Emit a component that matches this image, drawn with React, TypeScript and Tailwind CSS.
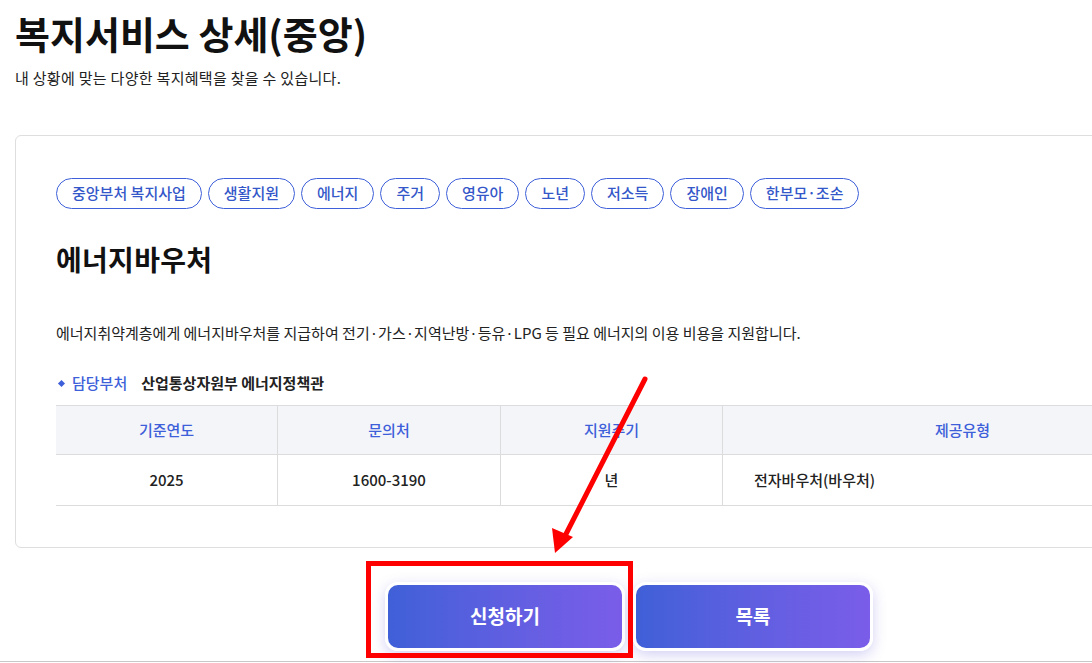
import React from 'react';

const tags = ['중앙부처 복지사업', '생활지원', '에너지', '주거', '영유아', '노년', '저소득', '장애인', '한부모·조손'];

const headers = ['기준연도', '문의처', '지원주기', '제공유형'];

const App: React.FC = () => {
  return (
    <div
      className="relative w-[1092px] h-[663px] overflow-hidden bg-white text-[#222]"
      style={{ fontFamily: '"Noto Sans CJK KR", "Noto Sans", sans-serif' }}
    >
      <div className="w-[1260px] px-[15px] pt-[10px] pb-[10px] border-b border-[#c8c8c8]">
        <h1 className="text-[38px] leading-[46px] font-bold text-[#111]">복지서비스 상세(중앙)</h1>
        <p className="mt-[12px] text-[15px] leading-[20px] text-[#222] tracking-[0.3px]">내 상황에 맞는 다양한 복지혜택을 찾을 수 있습니다.</p>

        <div className="mt-[47px] w-[1228px] border border-[#dedede] rounded-[6px] px-[40px] pt-[42px] pb-[41px]">
          <div className="flex gap-[6px]">
            {tags.map((tag) => (
              <span
                key={tag}
                className="h-[31px] px-[15px] flex items-center rounded-full border border-[#3d5fd9] text-[15px] font-medium text-[#3457c9]"
              >
                {tag}
              </span>
            ))}
          </div>

          <h2 className="mt-[32px] text-[28px] leading-[36px] font-bold text-[#111] tracking-[0.3px]">에너지바우처</h2>

          <p className="mt-[46px] text-[15px] leading-[20px] text-[#222]">
            에너지취약계층에게 에너지바우처를 지급하여 전기·가스·지역난방·등유·LPG 등 필요 에너지의 이용 비용을 지원합니다.
          </p>

          <div className="mt-[30px] flex items-center text-[15px] leading-[20px]">
            <span className="ml-[3px] w-[5px] h-[5px] bg-[#3d5fd9] rotate-45" />
            <span className="ml-[8px] font-medium text-[#3d5fd9]">담당부처</span>
            <span className="ml-[14px] font-bold text-[#222]">산업통상자원부 에너지정책관</span>
          </div>

          <div className="mt-[12px] border-t border-[#dcdcdc]">
            <div className="grid grid-cols-[221px_223px_222px_1fr] bg-[#f4f5f9] border-b border-[#dcdcdc] h-[49px]">
              {headers.map((h, i) => (
                <div
                  key={h}
                  className={`flex items-center justify-center text-[15px] font-medium text-[#3d5fd9] ${i > 0 ? 'border-l border-[#dcdcdc]' : ''}`}
                >
                  {h}
                </div>
              ))}
            </div>
            <div className="grid grid-cols-[221px_223px_222px_1fr] border-b border-[#dcdcdc] h-[51px] text-[15px] font-medium text-[#222]">
              <div className="flex items-center justify-center">2025</div>
              <div className="flex items-center justify-center border-l border-[#dcdcdc]">1600-3190</div>
              <div className="flex items-center justify-center border-l border-[#dcdcdc]">년</div>
              <div className="flex items-center pl-[31px] border-l border-[#dcdcdc]">전자바우처(바우처)</div>
            </div>
          </div>
        </div>

        <div className="mt-[34px] w-[1228px] flex justify-center gap-[8px]">
          <button className="w-[240px] h-[69px] rounded-[13px] border-[3px] border-white bg-gradient-to-r from-[#3f60d8] to-[#7a5de9] text-white text-[19px] font-bold shadow-[0_4px_14px_rgba(110,100,220,0.3)]">
            신청하기
          </button>
          <button className="w-[240px] h-[69px] rounded-[13px] border-[3px] border-white bg-gradient-to-r from-[#3f60d8] to-[#7a5de9] text-white text-[19px] font-bold shadow-[0_4px_14px_rgba(110,100,220,0.3)]">
            목록
          </button>
        </div>
      </div>

      {/* annotation overlay */}
      <div className="absolute left-[366px] top-[561px] w-[267px] h-[97px] border-[5px] border-[#ff0000]" />
      <svg className="absolute left-0 top-0 pointer-events-none" width="1092" height="663">
        <line x1="645" y1="379" x2="566" y2="534" stroke="#ff0000" strokeWidth="5" strokeLinecap="round" />
        <polygon points="555,553 552,528 573,537" fill="#ff0000" />
      </svg>
    </div>
  );
};

export default App;
